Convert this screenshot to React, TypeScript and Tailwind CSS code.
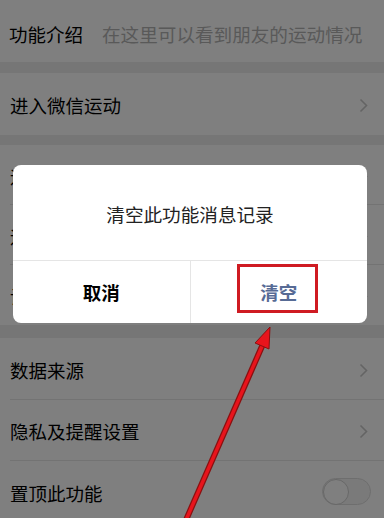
import React from 'react';

const font = { fontFamily: '"Noto Sans CJK SC", "Noto Sans", sans-serif' };

const Chevron: React.FC = () => (
    <svg width="9" height="15" viewBox="0 0 9 15" className="shrink-0">
        <path d="M1.5 1.5 L7.5 7.5 L1.5 13.5" fill="none" stroke="#c8c8c8" strokeWidth="1.6" />
    </svg>
);

const Row: React.FC<{ label: string; h: string; last?: boolean; right?: React.ReactNode }> = ({ label, h, last, right }) => (
    <div className={`bg-white pl-[10px] ${h}`}>
        <div className={`h-full flex items-center justify-between pr-[16px] pt-[3px] ${last ? '' : 'border-b border-[#e6e6e6]'}`}>
            <span className="text-[18.5px] text-black leading-none">{label}</span>
            {right ?? <Chevron />}
        </div>
    </div>
);

const App: React.FC = () => {
    return (
        <div className="relative w-[384px] h-[518px] overflow-hidden bg-[#ededed]" style={font}>
            {/* Settings list */}
            <div className="flex flex-col">
                <div className="bg-white h-[62px] pl-[9px] flex items-center gap-[19px] pt-[6px]">
                    <span className="text-[18.5px] text-black leading-none">功能介绍</span>
                    <span className="text-[18.6px] text-[#b3b3b3] leading-none">在这里可以看到朋友的运动情况</span>
                </div>
                <div className="h-[11px]" />
                <Row label="进入微信运动" h="h-[62px]" last />
                <div className="h-[10px]" />
                <Row label="运动排行榜" h="h-[60px]" />
                <Row label="运动记录" h="h-[60px]" />
                <Row label="设置" h="h-[60px]" last />
                <div className="h-[13px]" />
                <Row label="数据来源" h="h-[62px]" />
                <Row label="隐私及提醒设置" h="h-[61px]" />
                <Row
                    label="置顶此功能"
                    h="h-[62px]"
                    last
                    right={
                        <div className="w-[49px] h-[27px] rounded-full border border-[#dcdcdc] bg-[#f4f4f4] flex items-center mr-[-3px] mb-[4px]">
                            <div className="w-[26px] h-[26px] rounded-full bg-white border border-[#d0d0d0]" />
                        </div>
                    }
                />
            </div>

            {/* Dim overlay */}
            <div className="absolute inset-0 bg-black/50" />

            {/* Dialog */}
            <div className="absolute left-[13px] top-[165px] w-[354px] h-[158px] bg-white rounded-[8px] flex flex-col">
                <div className="h-[96px] flex items-center justify-center border-b border-[#e5e5e5] pt-[3px]">
                    <span className="text-[18.6px] text-[#222] leading-none">清空此功能消息记录</span>
                </div>
                <div className="flex-1 flex">
                    <div className="flex-1 flex items-center justify-center border-r border-[#e5e5e5]">
                        <span className="text-[18.5px] font-bold text-black leading-none">取消</span>
                    </div>
                    <div className="flex-1 flex items-center justify-center">
                        <span className="text-[18.5px] font-bold text-[#576b95] leading-none">清空</span>
                    </div>
                </div>
                <div className="absolute left-[224px] top-[99px] w-[81px] h-[49px] border-[3px] border-[#cf1b22]" />
            </div>

            {/* Annotation arrow */}
            <svg className="absolute inset-0" width="384" height="518" viewBox="0 0 384 518">
                <line x1="186" y1="520" x2="263" y2="344" stroke="#8a1010" strokeWidth="6" strokeLinecap="round" />
                <line x1="186" y1="520" x2="263" y2="344" stroke="#e8141c" strokeWidth="3.5" strokeLinecap="round" />
                <polygon points="270,327 269,349 255,343" fill="#e8141c" stroke="#8a1010" strokeWidth="1" />
            </svg>
        </div>
    );
};

export default App;
